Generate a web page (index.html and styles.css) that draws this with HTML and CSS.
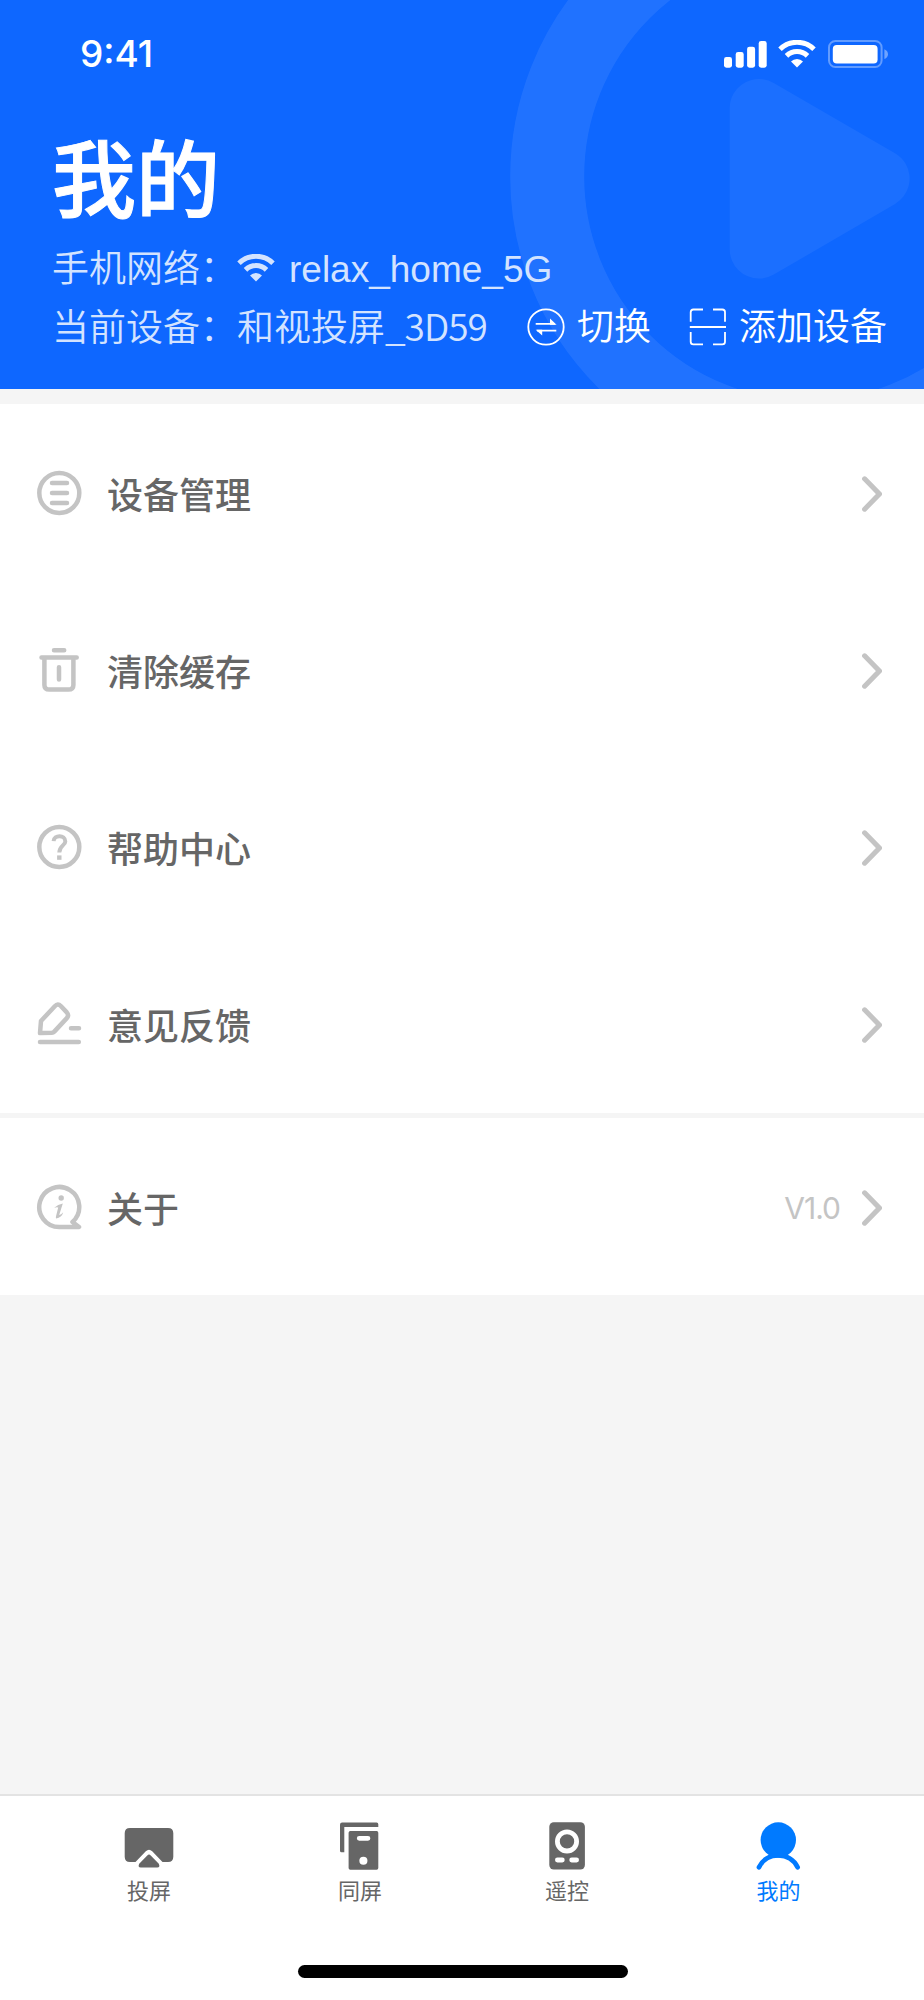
FILE: index.html
```html
<!DOCTYPE html>
<html lang="zh-CN">
<head>
	<meta charset="utf-8">
	<title>我的</title>
	<link rel="stylesheet" href="styles.css">
</head>
<body>
<div class="header">
	<svg class="headerBg" width="924" height="389" viewBox="0 0 924 389">
		<circle cx="808" cy="176.5" r="260.8" fill="none" stroke="#fff" stroke-opacity=".08" stroke-width="74"/>
		<g opacity=".05"><path d="M759 108.3V249.3L880.3 178.6Z" fill="#fff" stroke="#fff" stroke-width="58.6" stroke-linejoin="round"/></g>
	</svg>
	<div class="statusbar">
		<span class="time">9:41</span>
		<svg class="signal" width="43" height="28" viewBox="0 0 43 28" fill="#fff">
			<rect x="0" y="17" width="8" height="10.7" rx="2.4"/>
			<rect x="11.7" y="12" width="8" height="15.7" rx="2.4"/>
			<rect x="23.1" y="6.7" width="8" height="21" rx="2.4"/>
			<rect x="34.7" y="1" width="8" height="26.7" rx="2.4"/>
		</svg>
		<svg class="wifi" width="38" height="28" viewBox="0 0 38 28">
			<path d="M2 9.2A24.4 24.4 0 0 1 36 9.2M8.5 15.9A15 15 0 0 1 29.5 15.9" fill="none" stroke="#fff" stroke-width="5"/>
			<path d="M13 21.5A8.3 8.3 0 0 1 25 21.5L19 27.5Z" fill="#fff"/>
		</svg>
		<svg class="battery" width="61" height="28" viewBox="0 0 61 28">
			<rect x="1" y="1" width="52.6" height="26" rx="6.5" fill="none" stroke="#fff" stroke-opacity=".35" stroke-width="2"/>
			<rect x="4.8" y="5" width="44.8" height="18.4" rx="4" fill="#fff"/>
			<path d="M56.4 9.3Q60 11 60 14.2T56.4 19.1Z" fill="#fff" fill-opacity=".4"/>
		</svg>
	</div>
	<h1>我的</h1>
	<div class="info network">
		<span>手机网络：</span>
		<svg class="wifi" width="38" height="28" viewBox="0 0 38 28">
			<path d="M2 9.2A24.4 24.4 0 0 1 36 9.2M8.5 15.9A15 15 0 0 1 29.5 15.9" fill="none" stroke="#fff" stroke-width="5"/>
			<path d="M13 21.5A8.3 8.3 0 0 1 25 21.5L19 27.5Z" fill="#fff"/>
		</svg>
		<span class="ssid">relax_home_5G</span>
	</div>
	<div class="info device">
		<span class="name">当前设备：和视投屏<span class="code">_3D59</span></span>
		<a class="action switch">
			<svg width="38" height="38" viewBox="0 0 38 38">
				<circle cx="19" cy="19" r="17.7" fill="none" stroke="#fff" stroke-width="1.8"/>
				<path d="M8.7 15.8H28M10 22.6H29.3" stroke="#fff" stroke-width="1.8"/>
				<path d="M23 10.6L29.6 16.7H23ZM15.2 27.5L8.7 21.7H15.2Z" fill="#fff"/>
			</svg>
			<span>切换</span>
		</a>
		<a class="action">
			<svg width="38" height="38" viewBox="0 0 38 38" fill="none" stroke="#fff" stroke-width="1.8">
				<path d="M1.7 13.8V4.2Q1.7 1.5 4.4 1.5H14M24 1.5H33.3Q36 1.5 36 4.2V13.8M1.7 24V33.7Q1.7 36.4 4.4 36.4H14M24 36.4H33.3Q36 36.4 36 33.7V24M.8 19H37"/>
			</svg>
			<span>添加设备</span>
		</a>
	</div>
</div>

<div class="list">
	<a class="row">
		<svg class="icon" viewBox="0 0 46 46">
			<circle cx="23.3" cy="23" r="20"/>
			<path d="M16 13H31M16 23H31M16 33H31"/>
		</svg>
		<span class="label">设备管理</span>
		<svg class="arrow" viewBox="0 0 20 36"><path d="M2.6 2.8L17.4 18L2.6 33.2"/></svg>
	</a>
	<a class="row">
		<svg class="icon" viewBox="0 0 46 46">
			<path d="M18 3.2H28.2M5.5 10.5H40.7M8.4 10.5V38Q8.4 42.6 13.4 42.6H32.4Q37.4 42.6 37.4 38V10.5M23 20.3V32.5"/>
		</svg>
		<span class="label">清除缓存</span>
		<svg class="arrow" viewBox="0 0 20 36"><path d="M2.6 2.8L17.4 18L2.6 33.2"/></svg>
	</a>
	<a class="row">
		<svg class="icon" viewBox="0 0 46 46">
			<circle cx="23.3" cy="23" r="20"/>
			<path class="mark" d="M17.6 17.2C17.9 10.5 29.3 10.5 29.3 17.4C29.3 21.5 23.3 21.6 23.3 28.5"/>
			<rect class="solid" x="21.1" y="31.4" width="4.4" height="4.4"/>
		</svg>
		<span class="label">帮助中心</span>
		<svg class="arrow" viewBox="0 0 20 36"><path d="M2.6 2.8L17.4 18L2.6 33.2"/></svg>
	</a>
	<a class="row">
		<svg class="icon" viewBox="0 0 46 46">
			<path d="M4 41H42.8M35 27.2H43"/>
			<path d="M4 32.1L5 20L18.8 5.2Q21.8 2 24.8 5L30.8 11.4Q33.4 14.4 30.6 17.4L18.3 30.6Q17.3 31.6 15.8 31.7Z"/>
		</svg>
		<span class="label">意见反馈</span>
		<svg class="arrow" viewBox="0 0 20 36"><path d="M2.6 2.8L17.4 18L2.6 33.2"/></svg>
	</a>
</div>

<div class="list">
	<a class="row">
		<svg class="icon" viewBox="0 0 46 46">
			<path d="M23.3 43A20 20 0 1 1 36.5 38L43 43Z"/>
			<circle class="solid" cx="25.2" cy="14" r="2.7"/>
			<path class="solid" d="M18.2 23.8Q22 20 26.8 19.4L23.2 31Q25 30.6 27.3 28.2Q25.6 33.8 20.2 34.4Q19.6 34 20 32.2L22.2 23.4Q20.4 22.8 18.2 23.8Z"/>
		</svg>
		<span class="label">关于</span>
		<span class="version">V1.0</span>
		<svg class="arrow" viewBox="0 0 20 36"><path d="M2.6 2.8L17.4 18L2.6 33.2"/></svg>
	</a>
</div>

<div class="tabbar">
	<div class="tabs">
		<a class="tab">
			<svg width="50" height="50" viewBox="0 0 50 50">
				<path d="M6 7H44Q49.3 7 49.3 12.3V35.7Q49.3 41 44 41H38.5L28.2 30.3Q25 27 21.8 30.3L11.5 41H6Q.7 41 .7 35.7V12.3Q.7 7 6 7Z"/>
				<path d="M23.3 34.5Q25 32.5 26.7 34.5L34.8 42.7Q36.5 46.5 33.3 46.5H16.7Q13.5 46.5 15.2 42.7Z"/>
			</svg>
			<span>投屏</span>
		</a>
		<a class="tab">
			<svg width="50" height="50" viewBox="0 0 50 50">
				<path d="M7.1 1.6H41.6Q43.3 1.6 43.3 3.3V6H9.3V31.3H6.5Q5 31.3 5 29.8V3.7Q5 1.6 7.1 1.6Z"/>
				<path fill-rule="evenodd" d="M15.3 10H41.6Q43.3 10 43.3 11.7V47Q43.3 48.7 41.6 48.7H15.3Q13.6 48.7 13.6 47V11.7Q13.6 10 15.3 10ZM24.2 15A2.3 2.3 0 0 0 24.2 19.7H33A2.3 2.3 0 0 0 33 15ZM28.4 35.7A4 4 0 0 0 28.4 43.8A4 4 0 0 0 28.4 35.7Z"/>
			</svg>
			<span>同屏</span>
		</a>
		<a class="tab">
			<svg width="50" height="50" viewBox="0 0 50 50">
				<rect x="7.3" y="1.3" width="35.6" height="47.3" rx="4.5"/>
				<circle cx="25" cy="20.4" r="9.6" fill="none" stroke="#fff" stroke-width="4.8"/>
				<path d="M15.4 39H20.3M29.7 39H34.6" stroke="#fff" stroke-width="4.8" stroke-linecap="round"/>
			</svg>
			<span>遥控</span>
		</a>
		<a class="tab active">
			<svg width="50" height="50" viewBox="0 0 50 50">
				<circle cx="24.3" cy="19" r="17.7"/>
				<path d="M5 46.3C12.5 30.4 36 30.4 43.6 46.3" fill="none" stroke="#007aff" stroke-width="4.8" stroke-linecap="round"/>
			</svg>
			<span>我的</span>
		</a>
	</div>
	<div class="homeIndicator"></div>
</div>
</body>
</html>
```
FILE: styles.css
```css
* { box-sizing: border-box; }
body {
	display: flex;
	flex-direction: column;
	width: 924px;
	height: 2000px;
	margin: 0;
	background-color: #f5f5f5;
	font-family: "Noto Sans CJK SC", sans-serif;
}
h1 { margin: 0; }
svg { flex: none; }

.header {
	position: relative;
	height: 389px;
	margin-bottom: 15px;
	background-color: #0e67ff;
	color: #fff;
}
.headerBg {
	position: absolute;
	top: 0;
	left: 0;
}
.statusbar {
	position: relative;
	display: flex;
	align-items: center;
	height: 108px;
	padding-left: 80px;
}
.time {
	width: 644px;
	font: 500 37px/40px Inter, sans-serif;
}
.signal { margin-right: 11px; }
.statusbar .wifi { margin-right: 12px; }

h1 {
	position: relative;
	height: 128px;
	padding: 17px 0 0 52px;
	font-size: 84px;
	font-weight: 500;
	line-height: 100px;
	-webkit-text-stroke: 1px #fff;
}

.info {
	position: relative;
	display: flex;
	height: 58px;
	padding-left: 52px;
	font-size: 37px;
	font-weight: 350;
	line-height: 60px;
	white-space: nowrap;
}
.network {
	align-items: baseline;
	color: #d3e3ff;
}
.network .wifi { opacity: .82; }
.ssid {
	margin-left: 14px;
	font-family: "Liberation Sans", sans-serif;
	font-weight: 400;
}
.device {
	height: 60px;
	line-height: 62px;
}
.device .name {
	width: 475px;
	color: #d3e3ff;
}
.code { letter-spacing: -1px; }
.action {
	display: flex;
	align-items: center;
}
.action svg {
	margin: 5px 12px 0 0;
}
.switch { width: 162px; }

.list {
	margin-bottom: 5px;
	background-color: #fff;
}
.row {
	display: flex;
	align-items: center;
	height: 177.25px;
	padding: 0 42px 0 36px;
}
.icon {
	width: 46px;
	height: 46px;
	margin-right: 25px;
	fill: none;
	stroke: #c4c4c4;
	stroke-width: 4.5;
	stroke-linecap: round;
	stroke-linejoin: round;
}
.icon .mark {
	stroke-width: 4;
	stroke-linecap: butt;
}
.icon .solid {
	fill: #c4c4c4;
	stroke: none;
}
.label {
	flex: 1;
	color: #666;
	font-size: 36px;
	font-weight: 500;
}
.version {
	margin: 3px 22px 0 0;
	color: #c4c4c4;
	font: 400 30px Inter, sans-serif;
	letter-spacing: -1px;
}
.arrow {
	width: 20px;
	height: 36px;
	margin-top: 2px;
	fill: none;
	stroke: #c4c4c4;
	stroke-width: 5;
	stroke-linecap: round;
}

.tabbar {
	height: 206px;
	margin-top: auto;
	border-top: 2px solid #e3e3e3;
	background-color: #fff;
}
.tabs {
	display: grid;
	grid-template-columns: 211px 211px 203px 220px;
	height: 169px;
	padding: 25px 0 0 43.5px;
}
.tab {
	display: flex;
	flex-direction: column;
	align-items: center;
	color: #666;
	fill: #666;
	font-size: 22px;
	line-height: 36px;
}
.active {
	color: #007aff;
	fill: #007aff;
}
.homeIndicator {
	width: 330px;
	height: 13px;
	margin-left: 298px;
	border-radius: 7px;
	background-color: #000;
}
```
